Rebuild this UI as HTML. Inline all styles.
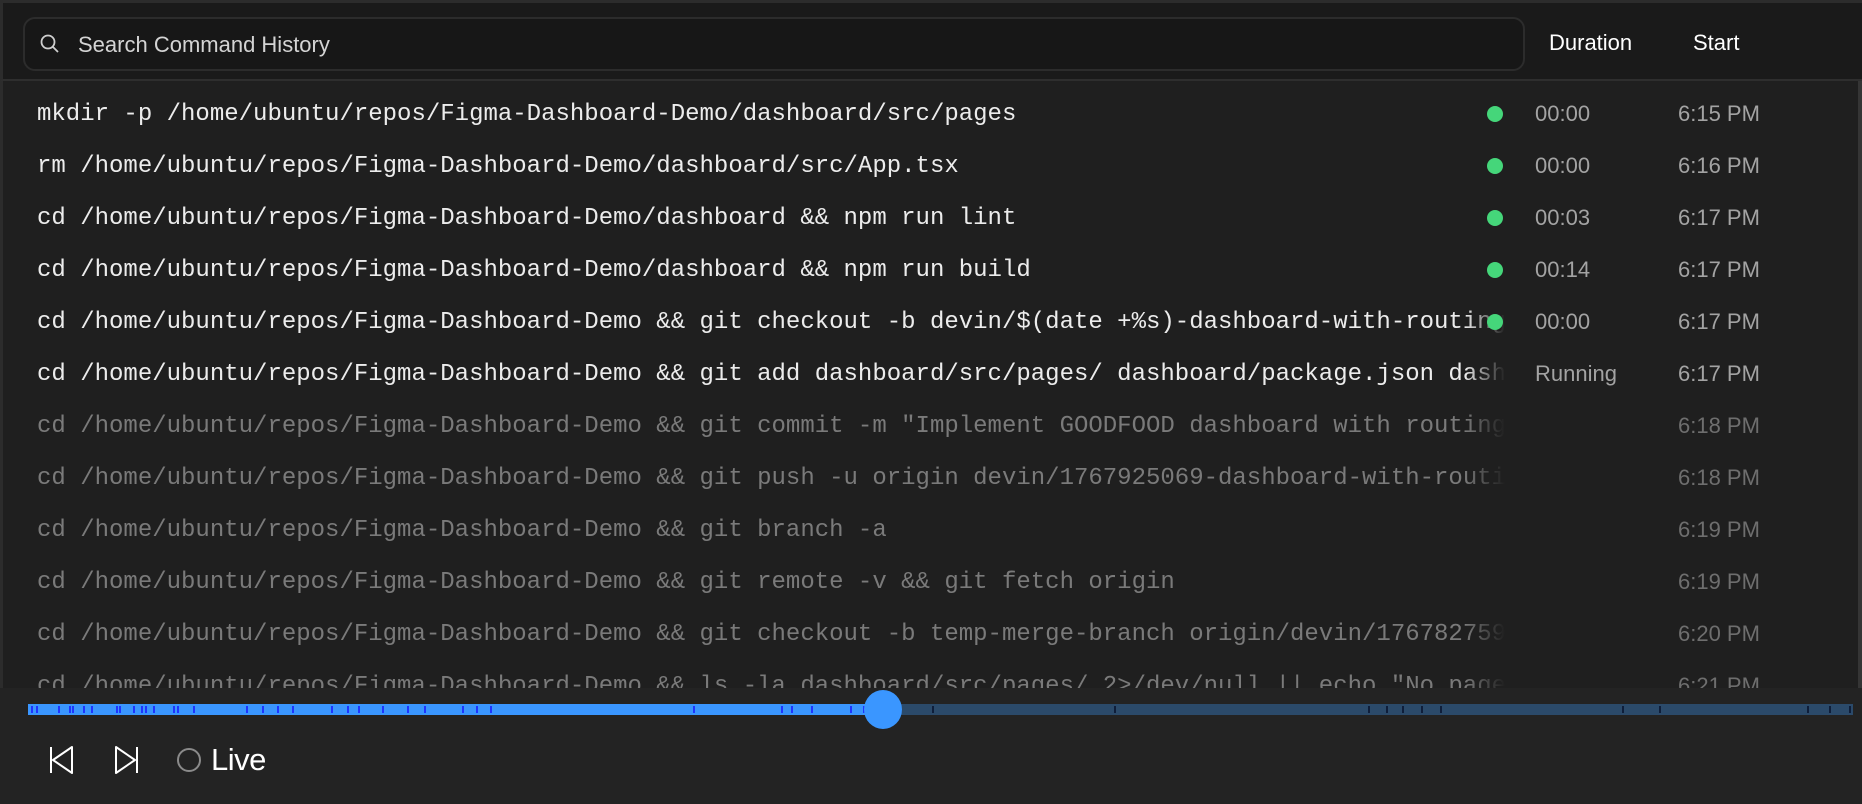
<!DOCTYPE html>
<html><head><meta charset="utf-8"><style>
*{margin:0;padding:0;box-sizing:border-box}
body{width:1862px;height:804px;overflow:hidden;background:#1f1f1f;font-family:"Liberation Sans",sans-serif;position:relative}
.top{position:absolute;left:0;top:0;width:1862px;height:81px;background:#1a1a1a;border-top:3px solid #2c2c2c;border-left:3px solid #2c2c2c;border-bottom:2px solid #2e2e2e}
.search{position:absolute;left:20px;top:14px;width:1502px;height:54px;border:2px solid #2c2c2c;border-radius:12px;background:#171717}
.search span{position:absolute;left:53px;top:13px;font-size:22px;color:#d4d4d4}
.hd{position:absolute;top:28px;font-size:22px;color:#fff}
.body{position:absolute;left:0;top:81px;width:1862px;height:607px;border-left:3px solid #2c2c2c;border-right:4px solid #353535;overflow:hidden}
.row{position:absolute;left:0;height:52px;width:1860px}
.cmd{position:absolute;left:34px;top:14px;width:1468px;overflow:hidden;white-space:nowrap;font-family:"Liberation Mono",monospace;font-size:24px;letter-spacing:0;color:#ececec}
.dim .cmd{color:#7a7a7a}
.dur,.tm{position:absolute;top:14px;font-size:22px;color:#a3a3a3}
.dur{left:1532px}.tm{left:1675px}
.dim .tm{color:#6e6e6e}
.dot{position:absolute;left:1484px;top:19px;width:16px;height:16px;border-radius:50%;background:#45d67a}
.fade{position:absolute;left:1462px;top:0;width:40px;height:52px;background:linear-gradient(90deg,rgba(31,31,31,0),#1f1f1f)}
.foot{position:absolute;left:0;top:688px;width:1862px;height:116px;background:#232323}
.bar{position:absolute;left:28px;top:16px;width:1825px;height:11px;background:#2b4a6a}
.played{position:absolute;left:0;top:0;width:855px;height:11px;background:#3a96ff}
.t{position:absolute;top:2px;width:2px;height:7px;background:#1f34ff}
.u{background:#0f1e3a}
.knob{position:absolute;left:864px;top:2px;width:38px;height:39px;border-radius:50%;background:#3a96ff}
</style></head><body>
<div class="top">
 <div class="search">
  <svg style="position:absolute;left:13px;top:13px" width="24" height="24" viewBox="0 0 24 24" fill="none" stroke="#cfcfcf" stroke-width="1.8"><circle cx="10" cy="10" r="6.5"/><path d="M15 15l5 5"/></svg>
  <span>Search Command History</span>
 </div>
 <div class="hd" style="left:1546px;top:27px">Duration</div>
 <div class="hd" style="left:1690px;top:27px">Start</div>
</div>
<div class="body">
 <div class="row" style="top:6px"><div class="cmd">mkdir -p /home/ubuntu/repos/Figma-Dashboard-Demo/dashboard/src/pages</div><div class="dot"></div><div class="dur">00:00</div><div class="tm">6:15 PM</div></div>
 <div class="row" style="top:58px"><div class="cmd">rm /home/ubuntu/repos/Figma-Dashboard-Demo/dashboard/src/App.tsx</div><div class="dot"></div><div class="dur">00:00</div><div class="tm">6:16 PM</div></div>
 <div class="row" style="top:110px"><div class="cmd">cd /home/ubuntu/repos/Figma-Dashboard-Demo/dashboard &amp;&amp; npm run lint</div><div class="dot"></div><div class="dur">00:03</div><div class="tm">6:17 PM</div></div>
 <div class="row" style="top:162px"><div class="cmd">cd /home/ubuntu/repos/Figma-Dashboard-Demo/dashboard &amp;&amp; npm run build</div><div class="dot"></div><div class="dur">00:14</div><div class="tm">6:17 PM</div></div>
 <div class="row" style="top:214px"><div class="cmd">cd /home/ubuntu/repos/Figma-Dashboard-Demo &amp;&amp; git checkout -b devin/$(date +%s)-dashboard-with-routing</div><div class="fade"></div><div class="dot"></div><div class="dur">00:00</div><div class="tm">6:17 PM</div></div>
 <div class="row" style="top:266px"><div class="cmd">cd /home/ubuntu/repos/Figma-Dashboard-Demo &amp;&amp; git add dashboard/src/pages/ dashboard/package.json dashboard</div><div class="fade"></div><div class="dur">Running</div><div class="tm">6:17 PM</div></div>
 <div class="row dim" style="top:318px"><div class="cmd">cd /home/ubuntu/repos/Figma-Dashboard-Demo &amp;&amp; git commit -m "Implement GOODFOOD dashboard with routing"</div><div class="fade"></div><div class="tm">6:18 PM</div></div>
 <div class="row dim" style="top:370px"><div class="cmd">cd /home/ubuntu/repos/Figma-Dashboard-Demo &amp;&amp; git push -u origin devin/1767925069-dashboard-with-routing</div><div class="fade"></div><div class="tm">6:18 PM</div></div>
 <div class="row dim" style="top:422px"><div class="cmd">cd /home/ubuntu/repos/Figma-Dashboard-Demo &amp;&amp; git branch -a</div><div class="tm">6:19 PM</div></div>
 <div class="row dim" style="top:474px"><div class="cmd">cd /home/ubuntu/repos/Figma-Dashboard-Demo &amp;&amp; git remote -v &amp;&amp; git fetch origin</div><div class="tm">6:19 PM</div></div>
 <div class="row dim" style="top:526px"><div class="cmd">cd /home/ubuntu/repos/Figma-Dashboard-Demo &amp;&amp; git checkout -b temp-merge-branch origin/devin/1767827593</div><div class="fade"></div><div class="tm">6:20 PM</div></div>
 <div class="row dim" style="top:578px"><div class="cmd">cd /home/ubuntu/repos/Figma-Dashboard-Demo &amp;&amp; ls -la dashboard/src/pages/ 2&gt;/dev/null || echo "No pages"</div><div class="fade"></div><div class="tm">6:21 PM</div></div>
</div>
<div class="foot">
 <div class="bar">
  <div class="played"></div>
  <div class="t" style="left:3px"></div><div class="t" style="left:8px"></div><div class="t" style="left:30px"></div><div class="t" style="left:41px"></div><div class="t" style="left:44px"></div><div class="t" style="left:55px"></div><div class="t" style="left:63px"></div><div class="t" style="left:88px"></div><div class="t" style="left:91px"></div><div class="t" style="left:105px"></div><div class="t" style="left:113px"></div><div class="t" style="left:117px"></div><div class="t" style="left:125px"></div><div class="t" style="left:145px"></div><div class="t" style="left:149px"></div><div class="t" style="left:165px"></div><div class="t" style="left:218px"></div><div class="t" style="left:234px"></div><div class="t" style="left:249px"></div><div class="t" style="left:264px"></div><div class="t" style="left:303px"></div><div class="t" style="left:319px"></div><div class="t" style="left:330px"></div><div class="t" style="left:354px"></div><div class="t" style="left:379px"></div><div class="t" style="left:396px"></div><div class="t" style="left:434px"></div><div class="t" style="left:448px"></div><div class="t" style="left:462px"></div><div class="t" style="left:665px"></div><div class="t" style="left:753px"></div><div class="t" style="left:763px"></div><div class="t" style="left:783px"></div><div class="t" style="left:822px"></div><div class="t" style="left:835px"></div>
  <div class="t u" style="left:904px"></div><div class="t u" style="left:1086px"></div><div class="t u" style="left:1340px"></div><div class="t u" style="left:1358px"></div><div class="t u" style="left:1374px"></div><div class="t u" style="left:1393px"></div><div class="t u" style="left:1412px"></div><div class="t u" style="left:1594px"></div><div class="t u" style="left:1631px"></div><div class="t u" style="left:1779px"></div><div class="t u" style="left:1801px"></div><div class="t u" style="left:1821px"></div>
 </div>
 <div class="knob"></div>
 <svg style="position:absolute;left:46px;top:56px" width="28" height="32" viewBox="0 0 28 32" fill="none" stroke="#fff" stroke-width="2" stroke-linejoin="round"><path d="M5 3v26"/><path d="M26 3L7 16l19 13z"/></svg>
 <svg style="position:absolute;left:114px;top:56px" width="28" height="32" viewBox="0 0 28 32" fill="none" stroke="#fff" stroke-width="2" stroke-linejoin="round"><path d="M23 3v26"/><path d="M2 3l19 13L2 29z"/></svg>
 <svg style="position:absolute;left:176px;top:59px" width="26" height="26" viewBox="0 0 26 26" fill="none" stroke="#8a8a8a" stroke-width="2"><circle cx="13" cy="13" r="11"/></svg>
 <div style="position:absolute;left:211px;top:54px;font-size:31px;color:#fff;letter-spacing:-0.5px">Live</div>
</div>
</body></html>
